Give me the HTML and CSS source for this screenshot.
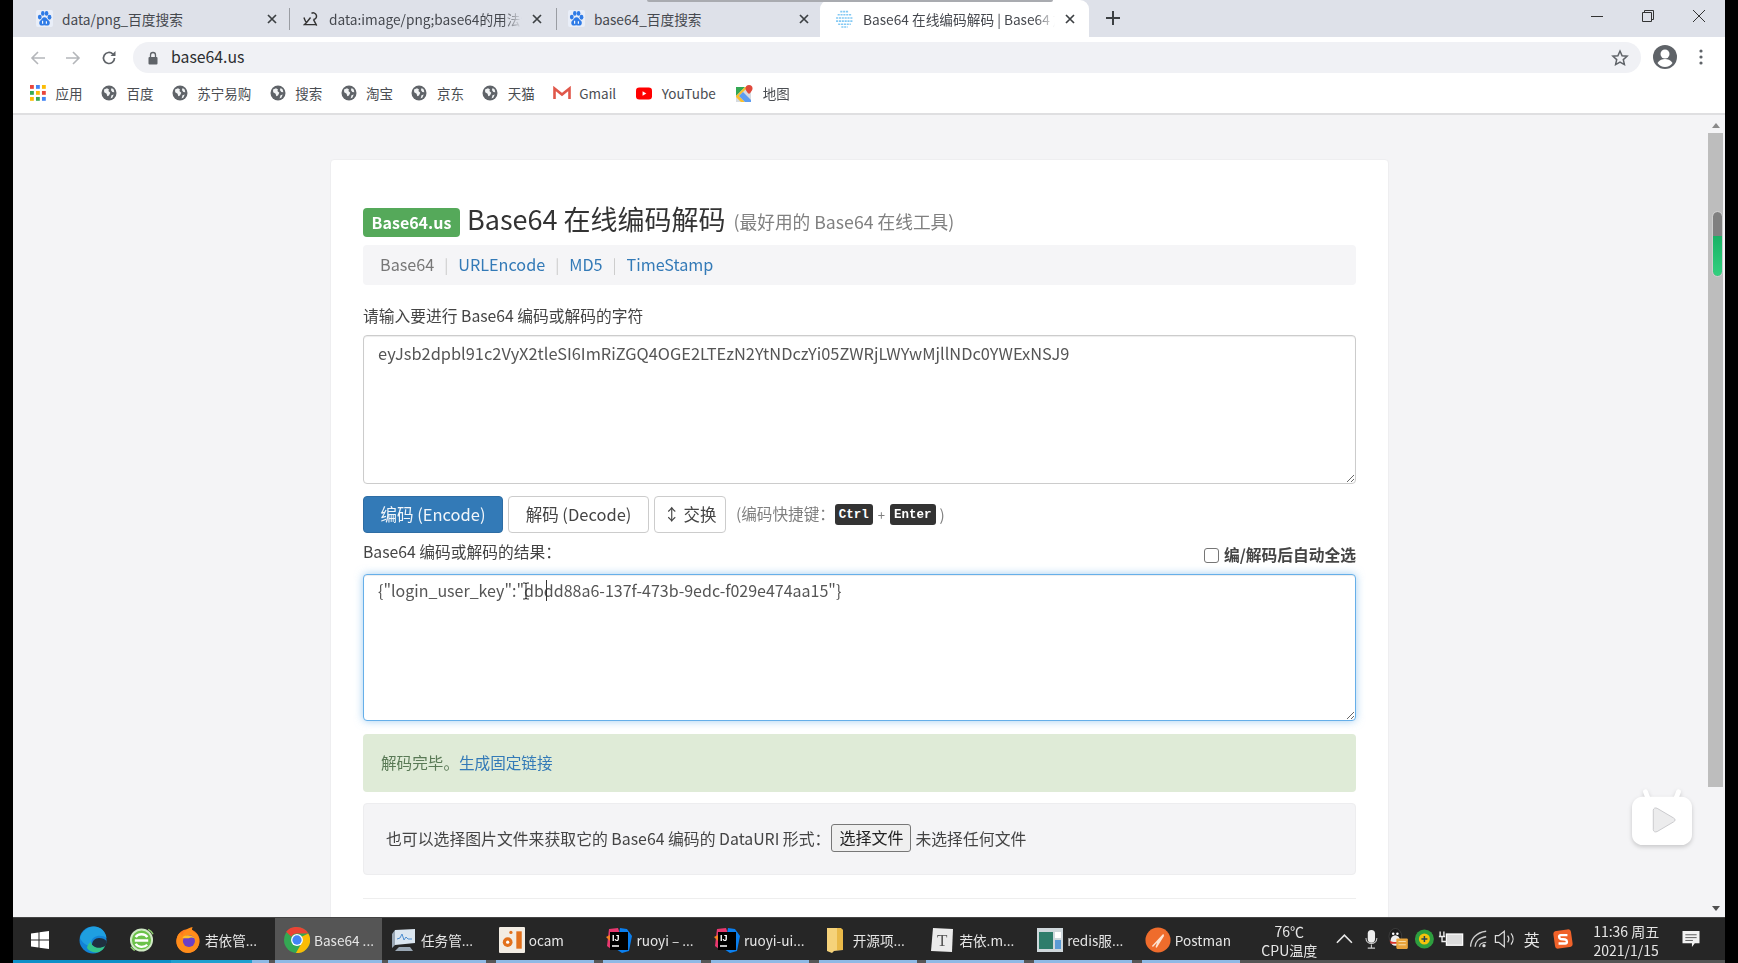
FILE: index.html
```html
<!DOCTYPE html>
<html lang="zh-CN">
<head>
<meta charset="utf-8">
<title>Base64 在线编码解码</title>
<link rel="stylesheet" href="styles.css">
</head>
<body>
<svg class="defs" width="0" height="0" aria-hidden="true">
  <symbol id="paw" viewBox="0 0 18 18">
    <rect width="18" height="18" rx="2" fill="#e9eef8"/>
    <ellipse cx="4" cy="7.5" rx="2" ry="2.6" fill="#2f7be6"/>
    <ellipse cx="7.2" cy="3.6" rx="1.9" ry="2.5" fill="#2f7be6"/>
    <ellipse cx="11.2" cy="3.6" rx="1.9" ry="2.5" fill="#2f7be6"/>
    <ellipse cx="14.3" cy="7.6" rx="2" ry="2.6" fill="#2f7be6"/>
    <path d="M9 7.6c-2.2 0-3 2.4-4.6 3.7C2.8 12.700 3.200 16.500 6 16.500c1.300 0 2-.4 3-.4s1.900.4 3.100.4c2.800 0 3.200-3.700 1.600-5.100C12.100 10 11.200 7.600 9 7.600z" fill="#2f7be6"/>
    <path d="M7 11.500v3M11 12v2.500" stroke="#fff" stroke-width="1.200" fill="none"/>
  </symbol>
  <symbol id="globe" viewBox="0 0 16 16">
    <circle cx="8" cy="8" r="7.500" fill="#5f6368"/>
    <path d="M3 4.500 6 3.200l2 1.300-.6 1.600L9.300 7.700 8 10.600 6.300 11.300 5.600 8.800 3.200 7.300zM10.700 2.900l2 1.600.6 2.700-2-.2-1.400-1.900zM10.500 10.300l2.200-.7-1.200 3-1.900.9z" fill="#f1f3f4"/>
  </symbol>
  <symbol id="close" viewBox="0 0 12 12">
    <path d="M2 2l8 8M10 2l-8 8" stroke="#3c4043" stroke-width="1.700" fill="none"/>
  </symbol>
  <symbol id="idea" viewBox="0 0 26 26">
    <path d="M3 2l9-1 2 6-9 15-4-3z" fill="#e8386f"/>
    <path d="M0 10l4-2v6z" fill="#f58220"/>
    <path d="M14 1l7 1 5 7-3 15-7 2-6-4z" fill="#0a7fef"/>
    <rect x="4" y="5" width="18" height="18" fill="#000"/>
    <path d="M6 19h7" stroke="#fff" stroke-width="1.500"/>
  </symbol>
</svg>

<div class="screen">
  <div class="edge"></div>
  <div class="desktop">

    <header class="tabstrip">
      <div class="tab tab-first">
        <svg class="tab-icon"><use href="#paw"/></svg>
        <span class="tab-title">data/png_百度搜索</span>
        <svg class="tab-close"><use href="#close"/></svg>
      </div>
      <div class="tab tab-divided tab-second">
        <svg class="tab-icon" viewBox="0 0 18 18"><path d="M1 8c1 3 2 5 3 5l4-5M9 3.500a3.500 3.500 0 1 1 2 6.500M11 10l3.500 6.500M4 13l-2.500 2.500h13" stroke="#333" stroke-width="1.500" fill="none"/></svg>
        <span class="tab-title tab-fade">data:image/png;base64的用法详解</span>
        <svg class="tab-close"><use href="#close"/></svg>
      </div>
      <div class="tab tab-divided tab-third">
        <svg class="tab-icon"><use href="#paw"/></svg>
        <span class="tab-title">base64_百度搜索</span>
        <svg class="tab-close"><use href="#close"/></svg>
      </div>
      <div class="tab tab-active">
        <svg class="tab-icon tab-icon-site" viewBox="0 0 18 18"><g stroke="#83c9f4" stroke-width="1.500" stroke-dasharray="2 .7"><path d="M5 2.500h8M2.500 5.500h13M1 8.500h16M1 11.500h16M3 14.500h12M6 17h6"/></g></svg>
        <span class="tab-title tab-fade">Base64 在线编码解码 | Base64 加密解密</span>
        <svg class="tab-close"><use href="#close"/></svg>
      </div>
      <svg class="new-tab" viewBox="0 0 14 14"><path d="M7 0v14M0 7h14" stroke="#3c4043" stroke-width="2"/></svg>
      <div class="window-controls">
        <svg viewBox="0 0 14 14"><path d="M1 7.500h12" stroke="#333" stroke-width="1"/></svg>
        <svg viewBox="0 0 14 14"><path d="M1.500 3.500h9v9h-9zM3.500 3.500v-2h9v9h-2" stroke="#333" stroke-width="1" fill="none"/></svg>
        <svg viewBox="0 0 14 14"><path d="M1 1l12 12M13 1L1 13" stroke="#333" stroke-width="1"/></svg>
      </div>
      <div class="tab-shadow"></div>
    </header>

    <nav class="toolbar">
      <svg class="tool" viewBox="0 0 16 16"><path d="M15 8H2M8 2 2 8l6 6" stroke="#b4b6ba" stroke-width="1.600" fill="none"/></svg>
      <svg class="tool tool-forward" viewBox="0 0 16 16"><path d="M1 8h13M8 2l6 6-6 6" stroke="#b4b6ba" stroke-width="1.600" fill="none"/></svg>
      <svg class="tool tool-reload" viewBox="0 0 16 16"><path d="M13.500 8a5.500 5.500 0 1 1-1.600-3.900" stroke="#5f6368" stroke-width="1.700" fill="none"/><path d="M14.500 1v5h-5z" fill="#5f6368"/></svg>
      <div class="omnibox">
        <svg class="lock" viewBox="0 0 12 14"><path d="M3.500 6V4a2.500 2.500 0 0 1 5 0v2" stroke="#5f6368" stroke-width="1.300" fill="none"/><rect x="1.500" y="6" width="9" height="7.500" rx="1" fill="#5f6368"/></svg>
        <span class="url">base64.us</span>
        <svg class="star" viewBox="0 0 18 18"><path d="M9 2l2.100 4.700 5 .5-3.800 3.400 1.100 5L9 13l-4.400 2.600 1.100-5L1.900 7.200l5-.5z" stroke="#5f6368" stroke-width="1.500" fill="none"/></svg>
      </div>
      <svg class="avatar" viewBox="0 0 24 24"><circle cx="12" cy="12" r="12" fill="#5f6368"/><circle cx="12" cy="9" r="4.500" fill="#fff"/><path d="M4.500 18c2-3.200 5-4 7.500-4s5.500.8 7.500 4c-1.800 2.500-4.500 4-7.500 4s-5.700-1.500-7.500-4z" fill="#fff"/></svg>
      <svg class="menu-dots" viewBox="0 0 4 16"><circle cx="2" cy="2" r="1.600" fill="#5f6368"/><circle cx="2" cy="8" r="1.600" fill="#5f6368"/><circle cx="2" cy="14" r="1.600" fill="#5f6368"/></svg>
    </nav>

    <nav class="bookmarks">
      <a class="bm bm-apps">
        <svg viewBox="0 0 15 15"><g fill="#e8453c"><rect width="3.600" height="3.600"/><rect x="5.600" width="3.600" height="3.600" fill="#4285f4"/><rect x="11.200" width="3.600" height="3.600" fill="#fbbc05"/></g><g fill="#34a853"><rect y="5.600" width="3.600" height="3.600"/><rect x="5.600" y="5.600" width="3.600" height="3.600" fill="#fbbc05"/><rect x="11.200" y="5.600" width="3.600" height="3.600" fill="#e8453c"/><rect y="11.200" width="3.600" height="3.600" fill="#fbbc05"/><rect x="5.600" y="11.200" width="3.600" height="3.600"/><rect x="11.200" y="11.200" width="3.600" height="3.600" fill="#4285f4"/></g></svg>
        <span>应用</span>
      </a>
      <a class="bm"><svg><use href="#globe"/></svg><span>百度</span></a>
      <a class="bm"><svg><use href="#globe"/></svg><span>苏宁易购</span></a>
      <a class="bm"><svg><use href="#globe"/></svg><span>搜索</span></a>
      <a class="bm"><svg><use href="#globe"/></svg><span>淘宝</span></a>
      <a class="bm"><svg><use href="#globe"/></svg><span>京东</span></a>
      <a class="bm"><svg><use href="#globe"/></svg><span>天猫</span></a>
      <a class="bm bm-gmail"><svg viewBox="0 0 18 14"><path d="M1.500 13V2.500L9 8.500l7.500-6V13" stroke="#e0574a" stroke-width="2.600" fill="none"/></svg><span>Gmail</span></a>
      <a class="bm bm-yt"><svg viewBox="0 0 17 13"><rect width="17" height="13" rx="3.500" fill="#f00"/><path d="M7 4v5l4-2.500z" fill="#fff"/></svg><span>YouTube</span></a>
      <a class="bm bm-map"><svg viewBox="0 0 17 17"><rect y="2" width="15" height="15" fill="#d6dbe0"/><path d="M0 2h9L0 11z" fill="#34a853"/><path d="M0 11 9 2h3L3 11l6 6H5l-5-5z" fill="#fbc02d"/><path d="M3 11l4-4 8 8v2H9z" fill="#5c9cf0"/><path d="M13 0a3.500 3.500 0 0 1 3.500 3.500C16.500 6 13 9 13 9S9.500 6 9.500 3.500A3.500 3.500 0 0 1 13 0z" fill="#e0483b"/></svg><span>地图</span></a>
    </nav>

    <main class="viewport">
      <div class="page">
        <article class="card">
          <div class="title-row">
            <span class="badge">Base64.us</span>
            <h1 class="title">Base64 在线编码解码</h1>
            <small class="subtitle">(最好用的 Base64 在线工具)</small>
          </div>
          <ul class="crumbs">
            <li class="crumb-current">Base64</li>
            <li class="crumb-sep">|</li>
            <li class="crumb-link">URLEncode</li>
            <li class="crumb-sep">|</li>
            <li class="crumb-link">MD5</li>
            <li class="crumb-sep">|</li>
            <li class="crumb-link">TimeStamp</li>
          </ul>
          <label class="field-label field-label-first">请输入要进行 Base64 编码或解码的字符</label>
          <textarea class="code code-input" spellcheck="false">eyJsb2dpbl91c2VyX2tleSI6ImRiZGQ4OGE2LTEzN2YtNDczYi05ZWRjLWYwMjllNDc0YWExNSJ9</textarea>
          <div class="actions">
            <button class="btn btn-primary">编码 (Encode)</button>
            <button class="btn btn-decode">解码 (Decode)</button>
            <button class="btn btn-swap">↕ 交换</button>
            <span class="hint">(编码快捷键：<kbd>Ctrl</kbd><i class="plus">+</i><kbd>Enter</kbd><span class="hint-end">)</span></span>
          </div>
          <div class="result-head">
            <label class="field-label">Base64 编码或解码的结果：</label>
            <label class="auto-select"><input type="checkbox" class="check">编/解码后自动全选</label>
          </div>
          <div class="result-wrap">
            <textarea class="code code-output" spellcheck="false">{"login_user_key":"dbdd88a6-137f-473b-9edc-f029e474aa15"}</textarea>
            <span class="caret"></span>
            <svg class="ibeam" viewBox="0 0 8 18"><path d="M1 1h2l1 1 1-1h2M4 2v14M1 17h2l1-1 1 1h2" stroke="#333" stroke-width="1.100" fill="none"/></svg>
          </div>
          <div class="alert">解码完毕。<a class="alert-link">生成固定链接</a></div>
          <div class="well">
            <span>也可以选择图片文件来获取它的 Base64 编码的 DataURI 形式：</span>
            <button class="file-btn">选择文件</button>
            <span>未选择任何文件</span>
          </div>
          <hr class="rule">
        </article>
      </div>
      <aside class="scrollbar">
        <i class="arrow arrow-up"></i>
        <div class="thumb"></div>
        <i class="arrow arrow-down"></i>
        <div class="meter"><div class="meter-fill"></div></div>
      </aside>
      <svg class="tv" viewBox="0 0 64 62">
        <path d="M18 12 15 4M46 12l3-8" stroke="#fff" stroke-width="5" stroke-linecap="round"/>
        <rect x="1" y="9" width="62" height="50" rx="11" fill="#fff"/>
        <path d="M23 23c0-2 2-3 4-2l17 10c2 1 2 3 0 4L27 45c-2 1-4 0-4-2z" fill="#ececed" stroke="#c9c9cc" stroke-width="1"/>
      </svg>
    </main>

    <footer class="taskbar">
      <div class="task-lead">
        <svg class="start" viewBox="0 0 18 18"><path d="M0 2.600 7.500 1.500v7H0zM8.500 1.300 18 0v8.500H8.500zM0 9.500h7.500v7L0 15.400zM8.500 9.500H18V18L8.500 16.700z" fill="#fff"/></svg>
        <svg class="pin pin-edge" viewBox="0 0 28 28"><circle cx="14" cy="14" r="13.500" fill="#1283d6"/><path d="M1 12C3 5 9 .5 15 .5c7 0 12 5.500 12.500 11.500-3-2.500-9-3-12.500-.5-3 2-3.500 6-1.500 9C9 21 3 17 1 12z" fill="#1f9fe0"/><path d="M13 19c0-4 3-7 7-7 3 0 6 1 7.500 3 0 3-1 5-1.500 5.500-3 2-8 2-10 1z" fill="#1f2f3f"/><path d="M8 22c2 3 6 5.500 12 4 3-1.500 5-3.500 6-6-3 2-8 2.500-11 .5-2-1-3-3-3-5-2 2-4 4-4 6.500z" fill="#35c58a"/></svg>
        <svg class="pin pin-360" viewBox="0 0 26 26"><circle cx="13" cy="13" r="11" fill="#6cc24a" stroke="#cfe9c4" stroke-width="2"/><path d="M6 13.500h14M7 10c2-4 10-4 12 0M7 17c2 4 9 4 12 1" stroke="#fff" stroke-width="2.400" fill="none"/><path d="M20 2c2 1 4 3 5 5M2 20c1 2 3 3 4 4" stroke="#8fd16f" stroke-width="1.500" fill="none"/></svg>
      </div>
      <div class="task task-progress">
        <svg viewBox="0 0 26 28"><circle cx="13" cy="15" r="12.500" fill="#ff7a1f"/><path d="M13 28A12.500 12.500 0 0 1 .5 15C1 10 3 7 5 6c0 2 1 3 2 3 1-4 5-8 11-9-1 2-1 4 1 5 4 2 6 6 6 10 0 7-5 13-12 13z" fill="#ff8c1a"/><circle cx="14" cy="15" r="6.500" fill="#6b3fc6"/><path d="M7 11c3-3 10-3 13 1-2-1-5-1-6 0-3 0-6 1-7-1z" fill="#ffc229"/></svg>
        <span>若依管...</span>
      </div>
      <div class="task task-active">
        <svg viewBox="0 0 24 24"><circle cx="12" cy="12" r="12" fill="#34a853"/><path d="M12 0a12 12 0 0 1 10.400 6H12a6 6 0 0 0-5.200 3L2 4.300A12 12 0 0 1 12 0z" fill="#ea4335"/><path d="M22.400 6A12 12 0 0 1 11 24l5.200-9a6 6 0 0 0 0-6z" fill="#fbbc05"/><circle cx="12" cy="12" r="5.500" fill="#fff"/><circle cx="12" cy="12" r="4.300" fill="#4285f4"/></svg>
        <span>Base64 ...</span>
      </div>
      <div class="task">
        <svg viewBox="0 0 26 24"><path d="M4 2 24 1v14L4 17z" fill="#dbe6f0"/><path d="M6 11l3-1 2-4 2 6 2-3 2 2h4" stroke="#4f8fd0" stroke-width="1" fill="none"/><path d="M1 6l3-4v15l-3 3zM8 19h11l3 4H4z" fill="#9aa7b4"/></svg>
        <span>任务管...</span>
      </div>
      <div class="task">
        <svg viewBox="0 0 24 24"><rect width="24" height="24" rx="1" fill="#f3ede4"/><circle cx="8" cy="14" r="4.500" fill="#e2711d"/><circle cx="8" cy="14" r="1.500" fill="#fff"/><rect x="16" y="4" width="5" height="16" fill="#e2711d"/><circle cx="11" cy="5" r="1.500" fill="#e2711d"/></svg>
        <span>ocam</span>
      </div>
      <div class="task">
        <svg viewBox="0 0 26 26"><use href="#idea"/><text class="ij-text" x="6" y="14">IJ</text></svg>
        <span>ruoyi – ...</span>
      </div>
      <div class="task">
        <svg viewBox="0 0 26 26"><use href="#idea"/><text class="ij-text" x="6" y="14">IJ</text></svg>
        <span>ruoyi-ui...</span>
      </div>
      <div class="task task-folder">
        <svg viewBox="0 0 16 26"><path d="M0 1h11l5 2v20l-9 1-2 2-5-2z" fill="#f5d27a"/><path d="M10 1h4l2 2v20h-6z" fill="#e9b949"/></svg>
        <span>开源项...</span>
      </div>
      <div class="task">
        <svg viewBox="0 0 24 26"><path d="M3 1l20 1-1 23-21-1z" fill="#ebebeb"/><text class="t-text" x="7" y="19">T</text></svg>
        <span>若依.m...</span>
      </div>
      <div class="task">
        <svg viewBox="0 0 26 24"><rect width="26" height="24" fill="#cfd8dc"/><rect x="2" y="4" width="14" height="17" fill="#2e7d6b"/><rect x="18" y="4" width="6" height="6" fill="#fff"/><rect x="18" y="12" width="6" height="9" fill="#5b9bd5"/></svg>
        <span>redis服...</span>
      </div>
      <div class="task">
        <svg viewBox="0 0 28 28"><circle cx="14" cy="14" r="13.500" fill="#ef6c2c"/><path d="M8 21 20 8M14 16l-2 6 8-13z" stroke="#fde2d0" stroke-width="1.500" fill="none"/></svg>
        <span>Postman</span>
      </div>
      <div class="temp"><span>76℃</span><span>CPU温度</span></div>
      <div class="tray">
        <svg viewBox="0 0 16 16"><path d="M2 11l6-6 6 6" stroke="#e8e8e8" stroke-width="1.300" fill="none"/></svg>
        <svg viewBox="0 0 16 22"><rect x="4" y="1" width="8" height="14" rx="4" fill="#eee"/><path d="M2 10c0 8 12 8 12 0M8 17v4M4 21h8" stroke="#ccc" stroke-width="1.200" fill="none"/></svg>
        <svg class="tray-qq" viewBox="0 0 20 22"><ellipse cx="8" cy="8" rx="6" ry="7.500" fill="#1c1c1c" stroke="#555" stroke-width=".5"/><ellipse cx="8" cy="12" rx="4.500" ry="5" fill="#eee"/><circle cx="6" cy="5.500" r="1.200" fill="#fff"/><circle cx="10" cy="5.500" r="1.200" fill="#fff"/><path d="M2.500 12c3 2 8 2 11 0l-1 3-9 0z" fill="#d9342b"/><rect x="9" y="10" width="11" height="10" rx="1" fill="#e8a33b"/><path d="M11 13h7M11 16h7" stroke="#f6dca8" stroke-width="1"/></svg>
        <svg viewBox="0 0 20 20"><circle cx="10" cy="10" r="9.500" fill="#2e9e3f"/><circle cx="10" cy="10" r="5.500" fill="#f4c20d"/><path d="M10 7v6M7 10h6" stroke="#245" stroke-width="1.500"/></svg>
        <svg viewBox="0 0 20 16"><rect x="6" y="4" width="13" height="9" fill="#ddd" stroke="#fff"/><path d="M1 2v4M4 2v4M0 6h5M2.500 6v4h4" stroke="#eee" stroke-width="1.100" fill="none"/></svg>
        <svg viewBox="0 0 18 18"><path d="M2 16C2 9 7 3 16 2M6 16c0-4 3-8 10-9M10 16c0-2 2-4 6-4" stroke="#ccc" stroke-width="1.200" fill="none"/><circle cx="14" cy="15" r="1.500" fill="#ddd"/></svg>
        <svg viewBox="0 0 20 18"><path d="M1 6h3l5-4v14l-5-4H1z" stroke="#ddd" stroke-width="1.100" fill="none"/><path d="M12 6c1.500 2 1.500 4 0 6M15 4c2.500 3 2.500 7 0 10" stroke="#ddd" stroke-width="1.100" fill="none"/></svg>
        <span class="ime">英</span>
        <svg class="sogou" viewBox="0 0 18 18"><rect x="1" y="1" width="16" height="16" rx="3" fill="#f0622a" transform="rotate(-8 9 9)"/><path d="M13 5.500H7c-2 0-2 3 0 3.500l4 .5c2 .5 2 3.500 0 3.500H5" stroke="#fff" stroke-width="2.200" fill="none"/></svg>
      </div>
      <div class="clock"><span>11:36 周五</span><span>2021/1/15</span></div>
      <svg class="notify" viewBox="0 0 18 18"><path d="M0 0h18v13H13l-3 4v-4H0z" fill="#f2f2f2"/><path d="M3 4h12M3 7h12M3 10h8" stroke="#555" stroke-width="1"/></svg>
    </footer>
  </div>
  <div class="edge"></div>
</div>
</body>
</html>
```
FILE: styles.css
```css
* { box-sizing: border-box; }
html, body { margin: 0; height: 100%; overflow: hidden; background: #000; }
body { font-family: "Noto Sans CJK SC", "Noto Sans", sans-serif; color: #333; }
.defs { position: absolute; }
.screen { display: flex; width: 1738px; height: 963px; filter: blur(.4px); }
.edge { flex: 0 0 13px; background: #000; }
.desktop { flex: 0 0 1712px; display: flex; flex-direction: column; min-width: 0; }

/* tabs */
.tabstrip { position: relative; flex: 0 0 37px; display: flex; align-items: stretch; background: #dee1e9; padding-left: 9px; font-size: 13.7px; color: #45484e; }
.tab { flex: 0 0 267px; display: flex; align-items: center; padding: 0 11px 0 14px; gap: 9px; min-width: 0; }
.tab-second { padding-right: 13px; }
.tab-divided { position: relative; }
.tab-divided::before { content: ""; position: absolute; left: 0; top: 8px; bottom: 7px; width: 1px; background: #9a9da3; }
.tab-third { flex-basis: 264px; padding: 0 10px 0 12px; }
.tab-active { flex-basis: 269px; background: #fff; border-radius: 9px 9px 0 0; padding: 0 13px 0 15px; }
.tab-icon { flex: 0 0 17px; width: 17px; height: 17px; }
.tab-icon-site { flex-basis: 19px; width: 19px; height: 19px; }
.tab-title { flex: 1; min-width: 0; white-space: nowrap; overflow: hidden; }
.tab-fade { -webkit-mask-image: linear-gradient(90deg, #000 90%, transparent); mask-image: linear-gradient(90deg, #000 90%, transparent); }
.tab-close { flex: 0 0 12px; width: 12px; height: 12px; }
.new-tab { width: 14px; height: 14px; margin: 11px 0 0 17px; }
.window-controls { margin-left: auto; display: flex; gap: 37px; padding: 9px 19px 0 0; }
.window-controls svg { width: 14px; height: 14px; }
.tab-shadow { position: absolute; left: 634px; top: 0; width: 406px; height: 2px; background: #a9abb0; border-radius: 0 0 4px 4px; }

/* toolbar */
.toolbar { flex: 0 0 38px; display: flex; align-items: flex-start; background: #fff; padding: 5px 14px 0 17px; }
.tool { width: 16px; height: 16px; margin: 8px 19px 0 0; flex: none; }
.tool-forward { margin-right: 20px; }
.tool-reload { margin-right: 16px; }
.omnibox { flex: 0 0 1508px; height: 31px; border-radius: 16px; background: #f0f1f5; display: flex; align-items: center; padding: 0 12px 0 14px; }
.lock { width: 12px; height: 14px; flex: none; }
.url { margin: 0 0 3px 12px; font-size: 15.8px; color: #2b2d30; }
.star { margin-left: auto; width: 18px; height: 18px; }
.avatar { width: 24px; height: 24px; margin: 3px 0 0 12px; flex: none; }
.menu-dots { width: 4px; height: 16px; margin: 7px 0 0 22px; flex: none; }

/* bookmarks */
.bookmarks { flex: 0 0 40px; display: flex; align-items: center; background: #fff; border-bottom: 2px solid #dfdfe1; padding: 0 0 2px 17px; font-size: 13.5px; color: #4a4d52; }
.bm { display: flex; align-items: center; gap: 9.5px; margin-right: 18.4px; }
.bm svg { width: 16px; height: 16px; flex: none; }
.bm-gmail svg { width: 18px; height: 14px; }
.bm-gmail { gap: 8px; margin-right: 20px; }
.bm-yt svg { width: 16px; height: 13px; }
.bm-yt { margin-right: 20px; }
.bm-map svg { width: 17px; height: 17px; }
.bm-map { gap: 10px; }

/* page */
.viewport { position: relative; flex: 1; min-height: 0; display: flex; background: #f4f4f6; overflow: hidden; }
.page { flex: 1; min-width: 0; display: flex; justify-content: center; align-items: flex-start; padding-top: 44px; }
.card { flex: 0 0 1059px; background: #fff; border: 1px solid #eeeef0; border-radius: 4px; padding: 48px 32px 60px; min-height: 900px; font-size: 16px; }
.title-row { display: flex; align-items: center; height: 29px; }
.badge { display: flex; align-items: center; justify-content: center; width: 97px; height: 29px; padding-bottom: 2px; border-radius: 4px; background: #55a95a; color: #fff; font-weight: 700; font-size: 16px; }
.title { margin: 0 0 0 7px; font-size: 27px; font-weight: 400; line-height: 29px; color: #333; white-space: nowrap; position: relative; top: -4px; }
.subtitle { margin: 0 0 3px 8px; font-size: 17.7px; color: #808080; white-space: nowrap; }
.crumbs { display: flex; align-items: center; gap: 10px; margin: 8px 0 0; padding: 0 17px 2px; list-style: none; height: 40px; border-radius: 4px; background: #f5f5f7; font-size: 16.2px; }
.crumb-current { color: #777; }
.crumb-sep { color: #ccc; font-size: 15px; }
.crumb-link { color: #337ab7; }
.field-label { display: block; height: 24px; font-size: 15.75px; line-height: 21px; color: #444; }
.field-label-first { margin-top: 20px; }
.code { display: block; width: 100%; margin: 0; font: 16px/24px "Noto Sans CJK SC", "Noto Sans", sans-serif; color: #555; background: #fff; border: 1px solid #ccc; border-radius: 4px; padding: 5px 14px; outline: none; box-shadow: inset 0 1px 1px rgba(0,0,0,.075); }
.code-input { height: 149px; margin-top: 6px; font-size: 16.4px; }
.code-output { height: 147px; padding-top: 3px; border-color: #66afe9; box-shadow: inset 0 1px 1px rgba(0,0,0,.075), 0 0 8px rgba(102,175,233,.6); }
.actions { display: flex; align-items: center; gap: 5px; margin-top: 12px; }
.btn { flex: none; height: 37px; padding: 0 0 1px; border: 1px solid #ccc; border-radius: 4px; background: #fff; color: #444; font: 16.5px "Noto Sans CJK SC", sans-serif; white-space: nowrap; }
.btn-primary { width: 140px; background: #337ab7; border-color: #2e6da4; color: #f2f6fa; }
.btn-decode { width: 141px; }
.btn-swap { width: 72px; }
.hint { display: flex; align-items: center; margin-left: 5px; padding-bottom: 4px; font-size: 15.6px; color: #808080; white-space: nowrap; }
.hint-end { margin-left: 4px; position: relative; top: 1px; }
kbd { display: inline-block; padding: 0 4px; height: 21px; border-radius: 3px; background: #333; color: #fff; font: 700 12.5px/22px "Liberation Mono", monospace; position: relative; top: 2px; }
.plus { font-style: normal; font-size: 13px; margin: 0 5px; position: relative; top: 2px; }
.result-head { display: flex; align-items: center; justify-content: space-between; height: 24px; margin-top: 8px; }
.auto-select { display: flex; align-items: center; gap: 5px; font-size: 15.75px; font-weight: 700; color: #444; position: relative; top: 1px; }
.check { appearance: none; width: 15px; height: 15px; margin: 2px 0 0; border: 1px solid #767676; border-radius: 3px; background: #fff; }
.result-wrap { position: relative; margin-top: 9px; }
.caret { position: absolute; left: 183px; top: 6px; width: 1px; height: 21px; background: #333; }
.ibeam { position: absolute; left: 159px; top: 8px; width: 8px; height: 18px; }
.alert { display: flex; align-items: center; height: 58px; margin-top: 13px; padding: 0 18px 3px; border-radius: 4px; background: #dfebd7; color: #5a7a56; font-size: 15.6px; }
.alert-link { color: #337ab7; }
.well { display: flex; align-items: center; height: 72px; margin-top: 11px; padding: 0 22px 2px; border: 1px solid #ededef; border-radius: 4px; background: #f4f4f6; color: #444; white-space: nowrap; font-size: 15.85px; }
.file-btn { flex: 0 0 80px; height: 28px; margin: 0 4px 0 1px; padding: 0 0 2px; border: 1px solid #777; border-radius: 3px; background: #efefef; color: #222; font: 16px "Noto Sans CJK SC", sans-serif; }
.rule { margin: 23px 0 0; border: 0; border-top: 1px solid #eeeeee; }

/* scrollbar */
.scrollbar { flex: 0 0 19px; display: flex; flex-direction: column; align-items: center; position: relative; }
.arrow { width: 0; height: 0; border-left: 4px solid transparent; border-right: 4px solid transparent; flex: none; }
.arrow-up { margin-top: 8px; border-bottom: 5px solid #8a8a8a; }
.arrow-down { margin-top: auto; margin-bottom: 6px; border-top: 5px solid #505050; }
.thumb { width: 15px; height: 654px; margin-top: 5px; background: #bdbdbd; }
.meter { position: absolute; left: 7px; top: 97px; width: 9px; height: 64px; border-radius: 5px; background: #808080; overflow: hidden; outline: 1px solid #cfcfcf; }
.meter-fill { margin-top: 24px; height: 40px; background: linear-gradient(#19b265, #33d07f); }
.tv { position: absolute; right: 32px; top: 673px; width: 62px; height: 60px; filter: drop-shadow(0 2px 2px rgba(0,0,0,.18)); }

/* taskbar */
.taskbar { flex: 0 0 46px; display: flex; align-items: stretch; background: linear-gradient(#555, #555) bottom / 100% 3px no-repeat, #262626; border-top: 1px solid #444; color: #e6e6e6; font-size: 13.6px; white-space: nowrap; }
.task-lead { flex: 0 0 158px; display: flex; align-items: center; padding-top: 2px; border-bottom: 3px solid #0d90c8; }
.start { width: 18px; height: 18px; margin-left: 18px; }
.pin-edge { width: 28px; height: 28px; margin-left: 30px; }
.pin-360 { width: 25px; height: 26px; margin-left: 22px; }
.task { flex: 0 0 98px; display: flex; align-items: center; gap: 4px; margin-left: 9.7px; padding: 2px 0 0 3px; border-bottom: 3px solid #8fb9e5; overflow: hidden; }
.task svg { width: 26px; height: 26px; flex: none; }
.task-progress { margin-left: 0; padding-left: 4px; border-bottom-color: transparent; background: linear-gradient(90deg, #1ea0d0 83%, #8fb9e5 83%) bottom / 100% 3px no-repeat; background-origin: border-box; background-clip: border-box; }
.task-active { flex-basis: 107px; margin: 0 -3.7px 0 6px; padding-left: 9px; background: #555; }
.task-folder { gap: 10px; padding-left: 8px; }
.task-folder svg { width: 16px; }
.ij-text { font: 700 9px "Liberation Sans", sans-serif; fill: #fff; }
.t-text { font: 17px "Liberation Serif", serif; fill: #555; }
.temp { flex: 0 0 92px; display: flex; flex-direction: column; align-items: center; justify-content: center; padding: 0 0 0 7px; line-height: 19px; font-size: 14px; }
.tray { flex: 0 0 246px; margin-left: -1px; padding-bottom: 3px; display: flex; align-items: center; }
.tray svg { flex: 0 0 26.8px; width: 26.8px; height: 20px; }
.tray .tray-qq { height: 23px; }
.ime { flex: 0 0 26.8px; text-align: center; font-size: 16px; }
.tray .sogou { flex: 0 0 36px; width: 36px; height: 20px; }
.clock { flex: 0 0 90px; display: flex; flex-direction: column; align-items: center; justify-content: center; line-height: 19px; font-size: 14px; }
.notify { flex: 0 0 18px; width: 18px; height: 17px; margin: 13px 0 0 10.5px; }
```
